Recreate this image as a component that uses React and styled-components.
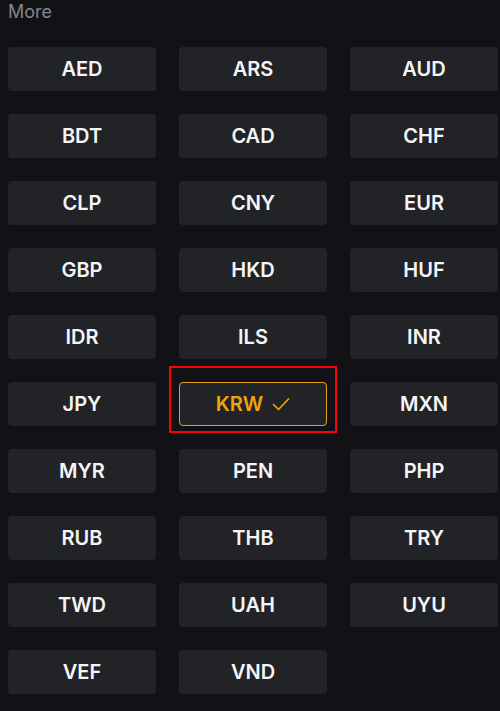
import React from "react";
import styled, { createGlobalStyle } from "styled-components";

const currencies = [
  "AED", "ARS", "AUD", "BDT", "CAD", "CHF", "CLP", "CNY", "EUR",
  "GBP", "HKD", "HUF", "IDR", "ILS", "INR", "JPY", "KRW", "MXN",
  "MYR", "PEN", "PHP", "RUB", "THB", "TRY", "TWD", "UAH", "UYU",
  "VEF", "VND",
];

const selected = "KRW";

const App = () => {
  return (
    <Page>
      <GlobalStyle />
      <Heading>More</Heading>
      <Grid>
        {currencies.map((code) => (
          <Cell key={code}>
            <Option active={code === selected}>
              {code}
              {code === selected && (
                <svg width="18" height="14" viewBox="0 0 18 14" fill="none">
                  <path d="M1.5 7.5l5 5L16.5 2" stroke="currentColor" strokeWidth="1.7" strokeLinecap="round" strokeLinejoin="round" />
                </svg>
              )}
            </Option>
            {code === selected && <Highlight />}
          </Cell>
        ))}
      </Grid>
    </Page>
  );
};

export default App;

const GlobalStyle = createGlobalStyle`
  html, body {
    margin: 0;
    background: #121216;
  }
`;

const Page = styled.div`
  width: 500px;
  height: 711px;
  background: #121216;
  font-family: "Inter", "Liberation Sans", sans-serif;
  overflow: hidden;
  padding: 0 2px 0 8px;
  box-sizing: border-box;
`;

const Heading = styled.div`
  color: #85858c;
  font-size: 18px;
  line-height: 24px;
  height: 26px;
`;

const Grid = styled.div`
  display: grid;
  grid-template-columns: repeat(3, 148px);
  column-gap: 23px;
  row-gap: 23px;
  margin-top: 21px;
`;

const Cell = styled.div`
  position: relative;
`;

const Option = styled.div`
  height: 44px;
  box-sizing: border-box;
  border-radius: 4px;
  background: #222327;
  border: 1.5px solid ${({ active }) => (active ? "#e9a01b" : "transparent")};
  color: ${({ active }) => (active ? "#f0a30a" : "#f5f5f5")};
  font-size: 20px;
  font-weight: 600;
  display: flex;
  align-items: center;
  justify-content: center;
  gap: 9px;
`;

const Highlight = styled.div`
  position: absolute;
  left: -10px;
  right: -10px;
  top: -16px;
  bottom: -7px;
  border: 2px solid #ff0000;
  pointer-events: none;
`;
